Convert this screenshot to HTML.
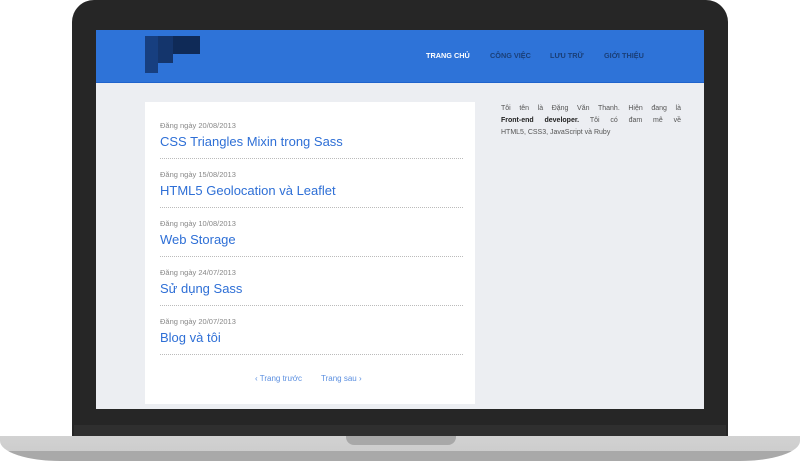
<!DOCTYPE html>
<html><head><meta charset="utf-8"><style>
*{margin:0;padding:0;box-sizing:border-box}
body{width:800px;height:461px;background:#fff;position:relative;overflow:hidden;font-family:"Liberation Sans",sans-serif}
.bezel{position:absolute;left:72px;top:0;width:656px;height:438px;background:#262626;border-radius:22px 22px 0 0}
.chin{position:absolute;left:74px;top:425px;width:652px;height:12px;background:#2f2f2f}
.screen{position:absolute;left:96px;top:30px;width:608px;height:379px;background:#eceef2;overflow:hidden}
.hdr{position:absolute;left:0;top:0;width:608px;height:53px;background:#2e73d8;border-bottom:1px solid #1f63cc}
.nav{position:absolute;top:21px;font-size:7.3px;font-weight:bold;color:#1a3f78}
.card{position:absolute;left:49px;top:72px;width:330px;height:302px;background:#fff}
.post{position:absolute;left:15px;width:303px;border-bottom:1px dotted #bbb;height:49px}
.d{position:absolute;left:0;font-size:7.5px;color:#888}
.t{position:absolute;left:0;font-size:13px;color:#2e6fd6;white-space:nowrap}
.side{position:absolute;left:405px;top:73px;width:180px;font-size:7px;color:#555;line-height:12px}
.j{text-align:justify;text-align-last:justify}
.base{position:absolute;left:0;top:436px;width:800px;height:25px;background:linear-gradient(#d2d2d2 0,#cdcdcd 60%,#a9a9a9 60%,#a9a9a9);border-radius:0 0 60px 60px/0 0 20px 20px}
.notch{position:absolute;left:346px;top:436px;width:110px;height:9px;background:#a8a8a8;border-radius:0 0 8px 8px}
</style></head><body>
<div class="bezel"></div>
<div class="chin"></div>
<div class="screen">
 <div class="hdr">
  <div style="position:absolute;left:49px;top:6px;width:13px;height:37px;background:#173f80"></div>
  <div style="position:absolute;left:62px;top:6px;width:15px;height:27px;background:#14356c"></div>
  <div style="position:absolute;left:77px;top:6px;width:27px;height:18px;background:#0f2a57"></div>
  <div class="nav" style="left:330px;color:#fff">TRANG CHỦ</div>
  <div class="nav" style="left:394px">CÔNG VIỆC</div>
  <div class="nav" style="left:454px">LƯU TRỮ</div>
  <div class="nav" style="left:508px">GIỚI THIỆU</div>
 </div>
 <div class="card">
  <div class="post" style="top:8px"><div class="d" style="top:11px">Đăng ngày 20/08/2013</div><div class="t" style="top:24px">CSS Triangles Mixin trong Sass</div></div>
  <div class="post" style="top:57px"><div class="d" style="top:11px">Đăng ngày 15/08/2013</div><div class="t" style="top:24px">HTML5 Geolocation và Leaflet</div></div>
  <div class="post" style="top:106px"><div class="d" style="top:11px">Đăng ngày 10/08/2013</div><div class="t" style="top:24px">Web Storage</div></div>
  <div class="post" style="top:155px"><div class="d" style="top:11px">Đăng ngày 24/07/2013</div><div class="t" style="top:24px">Sử dụng Sass</div></div>
  <div class="post" style="top:204px"><div class="d" style="top:11px">Đăng ngày 20/07/2013</div><div class="t" style="top:24px">Blog và tôi</div></div>
  <div style="position:absolute;left:110px;top:272px;font-size:8px;color:#5b8fe0">‹ Trang trước</div>
  <div style="position:absolute;left:176px;top:272px;font-size:8px;color:#5b8fe0">Trang sau ›</div>
 </div>
 <div class="side"><div class="j">Tôi tên là Đặng Văn Thanh. Hiện đang là</div><div class="j"><b style="color:#222">Front-end developer.</b> Tôi có đam mê về</div><div>HTML5, CSS3, JavaScript và Ruby</div></div>
</div>
<div class="base"></div>
<div class="notch"></div>
</body></html>
